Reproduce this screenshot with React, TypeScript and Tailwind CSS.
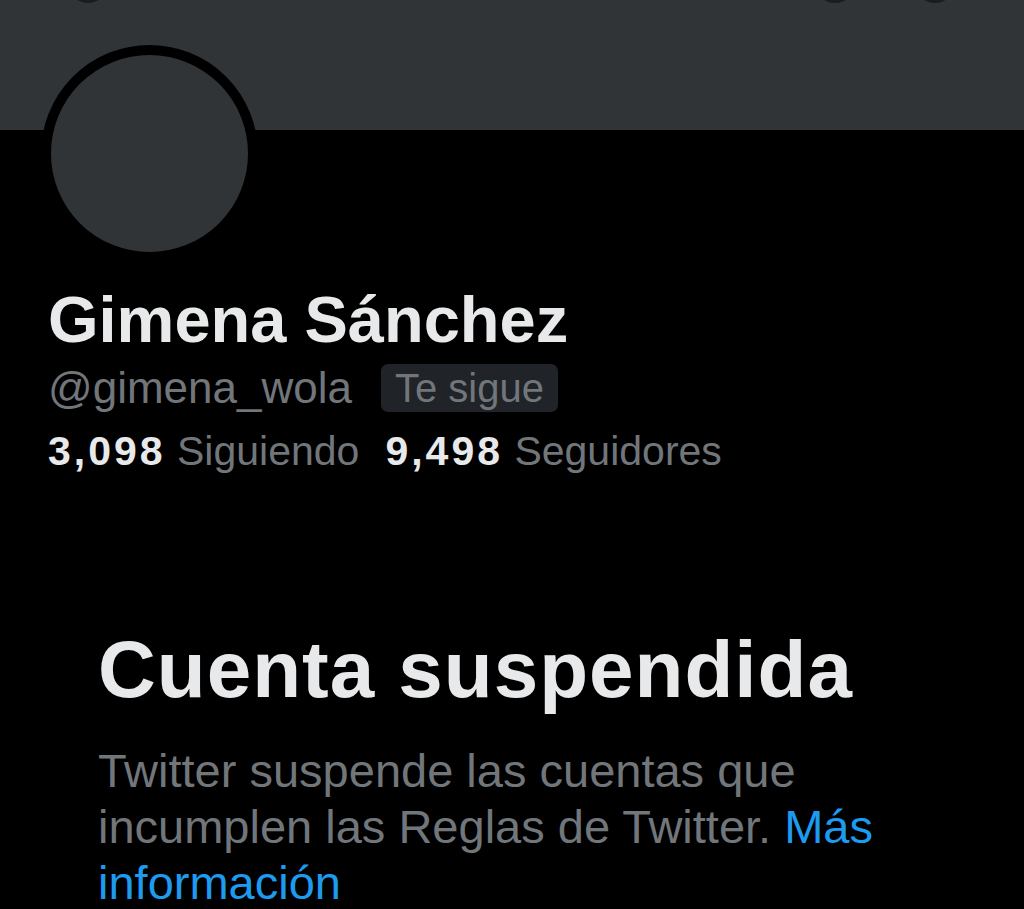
import React from 'react'

const font = { fontFamily: '"Liberation Sans", Arial, sans-serif' }

const TopButton = ({ left }: { left: number }) => (
  <div
    className="absolute top-[-37px] w-[40px] h-[40px] rounded-full bg-[#1a1c1e]"
    style={{ left }}
  />
)

export default function App() {
  return (
    <div className="w-[1024px] h-[909px] bg-black overflow-hidden" style={font}>
      {/* Banner */}
      <div className="relative h-[130px] bg-[#313437]">
        <TopButton left={68} />
        <TopButton left={815} />
        <TopButton left={915} />
      </div>

      {/* Avatar */}
      <div className="relative -mt-[85px] ml-[41px] w-[217px] h-[217px] rounded-full border-[10px] border-black bg-[#313437]" />

      {/* Profile info */}
      <div className="pl-[48px]">
        <h1 className="mt-[20px] text-[65px] leading-[76px] font-bold text-[#e7e9ea]">
          Gimena Sánchez
        </h1>
        <div className="mt-[5px] flex items-center gap-[29px]">
          <span className="text-[44px] leading-[50px] text-[#71767b]">@gimena_wola</span>
          <span className="h-[48px] px-[14px] flex items-center rounded-[7px] bg-[#202327] text-[40px] text-[#71767b]">
            Te sigue
          </span>
        </div>
        <div className="mt-[14px] flex gap-[26px] text-[41px] leading-[48px]">
          <span>
            <span className="font-bold text-[#e7e9ea] tracking-[3px]">3,098</span>{' '}
            <span className="text-[#71767b]">Siguiendo</span>
          </span>
          <span>
            <span className="font-bold text-[#e7e9ea] tracking-[3px]">9,498</span>{' '}
            <span className="text-[#71767b]">Seguidores</span>
          </span>
        </div>
      </div>

      {/* Suspended notice */}
      <div className="pl-[98px] mt-[155px]">
        <h2 className="text-[80px] leading-[80px] font-bold tracking-[1px] text-[#e7e9ea]">
          Cuenta suspendida
        </h2>
        <p className="mt-[33px] w-[790px] text-[47px] leading-[56px] text-[#71767b]">
          Twitter suspende las cuentas que incumplen las Reglas de Twitter.{' '}
          <a className="text-[#1d9bf0]">Más información</a>
        </p>
      </div>
    </div>
  )
}
